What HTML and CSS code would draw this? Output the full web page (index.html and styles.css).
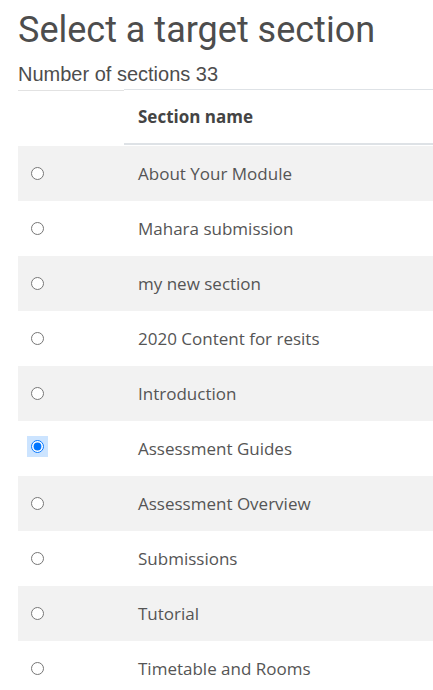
FILE: index.html
```html
<!DOCTYPE html>
<html>
<head>
<meta charset="utf-8">
<link rel="stylesheet" href="styles.css">
</head>
<body>
<div class="page">
  <h1 class="title">Select a target section</h1>
  <div class="count">Number of sections 33</div>
  <table class="sections">
    <thead>
      <tr><th class="sel"></th><th class="name">Section name</th></tr>
    </thead>
    <tbody>
      <tr><td class="sel"><input type="radio" name="s"></td><td class="name">About Your Module</td></tr>
      <tr><td class="sel"><input type="radio" name="s"></td><td class="name">Mahara submission</td></tr>
      <tr><td class="sel"><input type="radio" name="s"></td><td class="name">my new section</td></tr>
      <tr><td class="sel"><input type="radio" name="s"></td><td class="name">2020 Content for resits</td></tr>
      <tr><td class="sel"><input type="radio" name="s"></td><td class="name">Introduction</td></tr>
      <tr><td class="sel"><span class="hl"><input type="radio" name="s" checked></span></td><td class="name">Assessment Guides</td></tr>
      <tr><td class="sel"><input type="radio" name="s"></td><td class="name">Assessment Overview</td></tr>
      <tr><td class="sel"><input type="radio" name="s"></td><td class="name">Submissions</td></tr>
      <tr><td class="sel"><input type="radio" name="s"></td><td class="name">Tutorial</td></tr>
      <tr><td class="sel"><input type="radio" name="s"></td><td class="name">Timetable and Rooms</td></tr>
    </tbody>
  </table>
</div>
</body>
</html>
```
FILE: styles.css
```css
html, body { margin: 0; padding: 0; background: #fff; }
body { overflow: hidden; }
.page { padding: 0 0 0 18px; }
.title {
  font-family: Roboto, "Liberation Sans", sans-serif;
  font-weight: 400;
  font-size: 36px;
  line-height: 42px;
  color: #4d4d4d;
  margin: 9px 0 0 0;
}
.count {
  font-family: "Liberation Sans", Arial, sans-serif;
  font-size: 20px;
  line-height: 23px;
  color: #4d4d4d;
  margin: 12px 0 0 0;
}
.sections {
  border-collapse: separate;
  border-spacing: 0;
  width: 415px;
  margin-top: 4px;
  font-family: "Open Sans", "Noto Sans", sans-serif;
  font-size: 17px;
  color: #555;
}
.sections th {
  text-align: left;
  font-weight: 700;
  padding: 0 14px;
  vertical-align: middle;
  color: #444;
}
.sections th.sel { border-top: 1px solid #e2e2e2; width: 80px; padding: 0 13px; height: 55px; }
.sections th.name { border-top: 1px solid #dee2e6; border-bottom: 2px solid #dee2e6; height: 53px; position: relative; top: -1px; }
.sections td {
  height: 55px;
  padding: 0 14px;
  vertical-align: middle;
}
.sections td.sel { padding: 0 13px; }
.sections tbody tr:nth-child(odd) td { background: #f2f2f2; }
.sections input[type="radio"] {
  width: 13px;
  height: 13px;
  margin: 0;
  display: block;
  accent-color: #0075ff;
}
.hl {
  display: inline-block;
  background: #cce4ff;
  padding: 4px;
  margin: 0 -4px;
}
```
